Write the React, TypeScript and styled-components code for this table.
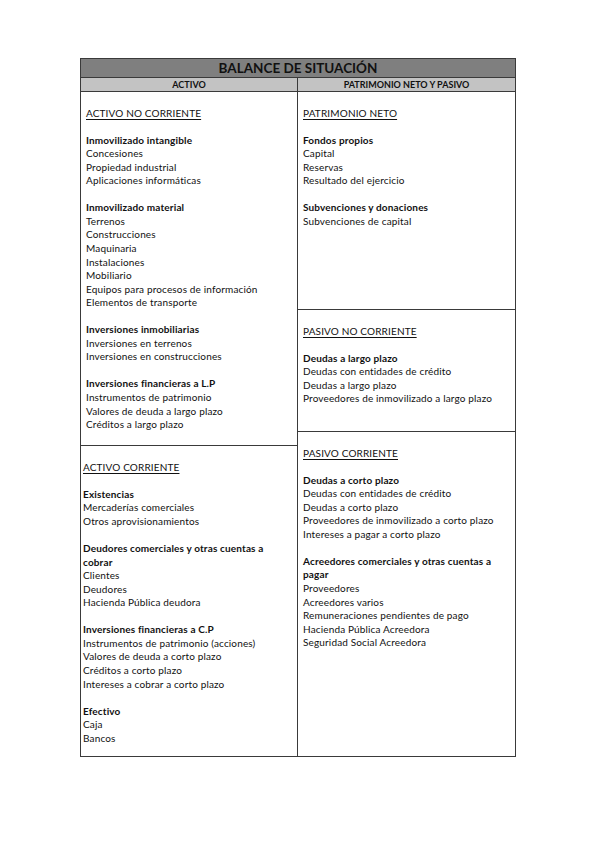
import React from "react";
import styled, { createGlobalStyle } from "styled-components";

type Kind = "head" | "bold" | "text" | "blank";
type Row = [Kind, string?];

const GlobalStyle = createGlobalStyle`
  html, body {
    margin: 0;
    padding: 0;
    background: #ffffff;
  }
  body {
    font-family: Lato, "Liberation Sans", sans-serif;
    color: #111111;
  }
`;

const Sheet = styled.div`
  padding: 58px 0 0 80px;
`;

const Table = styled.div`
  width: 436px;
  border: 1px solid #3a3a3a;
  box-sizing: border-box;
`;

const Title = styled.div`
  height: 18px;
  background: #7f7f7f;
  border-bottom: 1px solid #3a3a3a;
  text-align: center;
  font-weight: 700;
  font-size: 13.5px;
  line-height: 19px;
  color: #111111;
`;

const HeaderRow = styled.div`
  display: grid;
  grid-template-columns: 217px 1fr;
  background: #c3c3c3;
  border-bottom: 1px solid #3a3a3a;
  height: 13px;
`;

const HeaderCell = styled.div<{ $divider?: boolean }>`
  text-align: center;
  font-weight: 700;
  font-size: 9px;
  line-height: 14px;
  border-right: ${(p) => (p.$divider ? "1px solid #3a3a3a" : "none")};
`;

const Body = styled.div`
  display: grid;
  grid-template-columns: 217px 1fr;
`;

const Column = styled.div<{ $divider?: boolean }>`
  display: flex;
  flex-direction: column;
  border-right: ${(p) => (p.$divider ? "1px solid #3a3a3a" : "none")};
`;

const Cell = styled.div<{ $height?: number; $pad?: number; $last?: boolean; $grow?: boolean }>`
  padding: 1px 0 0 ${(p) => p.$pad ?? 5}px;
  height: ${(p) => (p.$height ? `${p.$height}px` : "auto")};
  flex: ${(p) => (p.$grow ? "1 1 auto" : "none")};
  box-sizing: border-box;
  border-bottom: ${(p) => (p.$last ? "none" : "1px solid #3a3a3a")};
`;

const Line = styled.div<{ $kind: Kind }>`
  height: 13.55px;
  font-size: 10px;
  line-height: 13.55px;
  white-space: nowrap;
  letter-spacing: 0.15px;
  font-weight: ${(p) => (p.$kind === "bold" ? 700 : 400)};
  text-decoration: ${(p) => (p.$kind === "head" ? "underline" : "none")};
  text-underline-offset: 1.5px;
`;

const b: Row = ["blank"];

const activoNoCorriente: Row[] = [
  b,
  ["head", "ACTIVO NO CORRIENTE"],
  b,
  ["bold", "Inmovilizado intangible"],
  ["text", "Concesiones"],
  ["text", "Propiedad industrial"],
  ["text", "Aplicaciones informáticas"],
  b,
  ["bold", "Inmovilizado material"],
  ["text", "Terrenos"],
  ["text", "Construcciones"],
  ["text", "Maquinaria"],
  ["text", "Instalaciones"],
  ["text", "Mobiliario"],
  ["text", "Equipos para procesos de información"],
  ["text", "Elementos de transporte"],
  b,
  ["bold", "Inversiones inmobiliarias"],
  ["text", "Inversiones en terrenos"],
  ["text", "Inversiones en construcciones"],
  b,
  ["bold", "Inversiones financieras a L.P"],
  ["text", "Instrumentos de patrimonio"],
  ["text", "Valores de deuda a largo plazo"],
  ["text", "Créditos a largo plazo"],
  b,
];

const activoCorriente: Row[] = [
  b,
  ["head", "ACTIVO CORRIENTE"],
  b,
  ["bold", "Existencias"],
  ["text", "Mercaderías comerciales"],
  ["text", "Otros aprovisionamientos"],
  b,
  ["bold", "Deudores comerciales y otras cuentas a"],
  ["bold", "cobrar"],
  ["text", "Clientes"],
  ["text", "Deudores"],
  ["text", "Hacienda Pública deudora"],
  b,
  ["bold", "Inversiones financieras a C.P"],
  ["text", "Instrumentos de patrimonio (acciones)"],
  ["text", "Valores de deuda a corto plazo"],
  ["text", "Créditos a corto plazo"],
  ["text", "Intereses a cobrar a corto plazo"],
  b,
  ["bold", "Efectivo"],
  ["text", "Caja"],
  ["text", "Bancos"],
];

const patrimonioNeto: Row[] = [
  b,
  ["head", "PATRIMONIO NETO"],
  b,
  ["bold", "Fondos propios"],
  ["text", "Capital"],
  ["text", "Reservas"],
  ["text", "Resultado del ejercicio"],
  b,
  ["bold", "Subvenciones y donaciones"],
  ["text", "Subvenciones de capital"],
];

const pasivoNoCorriente: Row[] = [
  b,
  ["head", "PASIVO NO CORRIENTE"],
  b,
  ["bold", "Deudas a largo plazo"],
  ["text", "Deudas con entidades de crédito"],
  ["text", "Deudas a largo plazo"],
  ["text", "Proveedores de inmovilizado a largo plazo"],
];

const pasivoCorriente: Row[] = [
  b,
  ["head", "PASIVO CORRIENTE"],
  b,
  ["bold", "Deudas a corto plazo"],
  ["text", "Deudas con entidades de crédito"],
  ["text", "Deudas a corto plazo"],
  ["text", "Proveedores de inmovilizado a corto plazo"],
  ["text", "Intereses a pagar a corto plazo"],
  b,
  ["bold", "Acreedores comerciales y otras cuentas a"],
  ["bold", "pagar"],
  ["text", "Proveedores"],
  ["text", "Acreedores varios"],
  ["text", "Remuneraciones pendientes de pago"],
  ["text", "Hacienda Pública Acreedora"],
  ["text", "Seguridad Social Acreedora"],
];

const Lines = ({ rows }: { rows: Row[] }) => (
  <>
    {rows.map(([kind, label], i) => (
      <Line key={i} $kind={kind}>
        {label ?? "\u00a0"}
      </Line>
    ))}
  </>
);

export default function App() {
  return (
    <Sheet>
      <GlobalStyle />
      <Table>
        <Title>BALANCE DE SITUACIÓN</Title>
        <HeaderRow>
          <HeaderCell $divider>ACTIVO</HeaderCell>
          <HeaderCell>PATRIMONIO NETO Y PASIVO</HeaderCell>
        </HeaderRow>
        <Body>
          <Column $divider>
            <Cell $pad={5}>
              <Lines rows={activoNoCorriente} />
            </Cell>
            <Cell $pad={2} $height={310} $last>
              <Lines rows={activoCorriente} />
            </Cell>
          </Column>
          <Column>
            <Cell $height={218}>
              <Lines rows={patrimonioNeto} />
            </Cell>
            <Cell $height={122}>
              <Lines rows={pasivoNoCorriente} />
            </Cell>
            <Cell $last $grow>
              <Lines rows={pasivoCorriente} />
            </Cell>
          </Column>
        </Body>
      </Table>
    </Sheet>
  );
}
